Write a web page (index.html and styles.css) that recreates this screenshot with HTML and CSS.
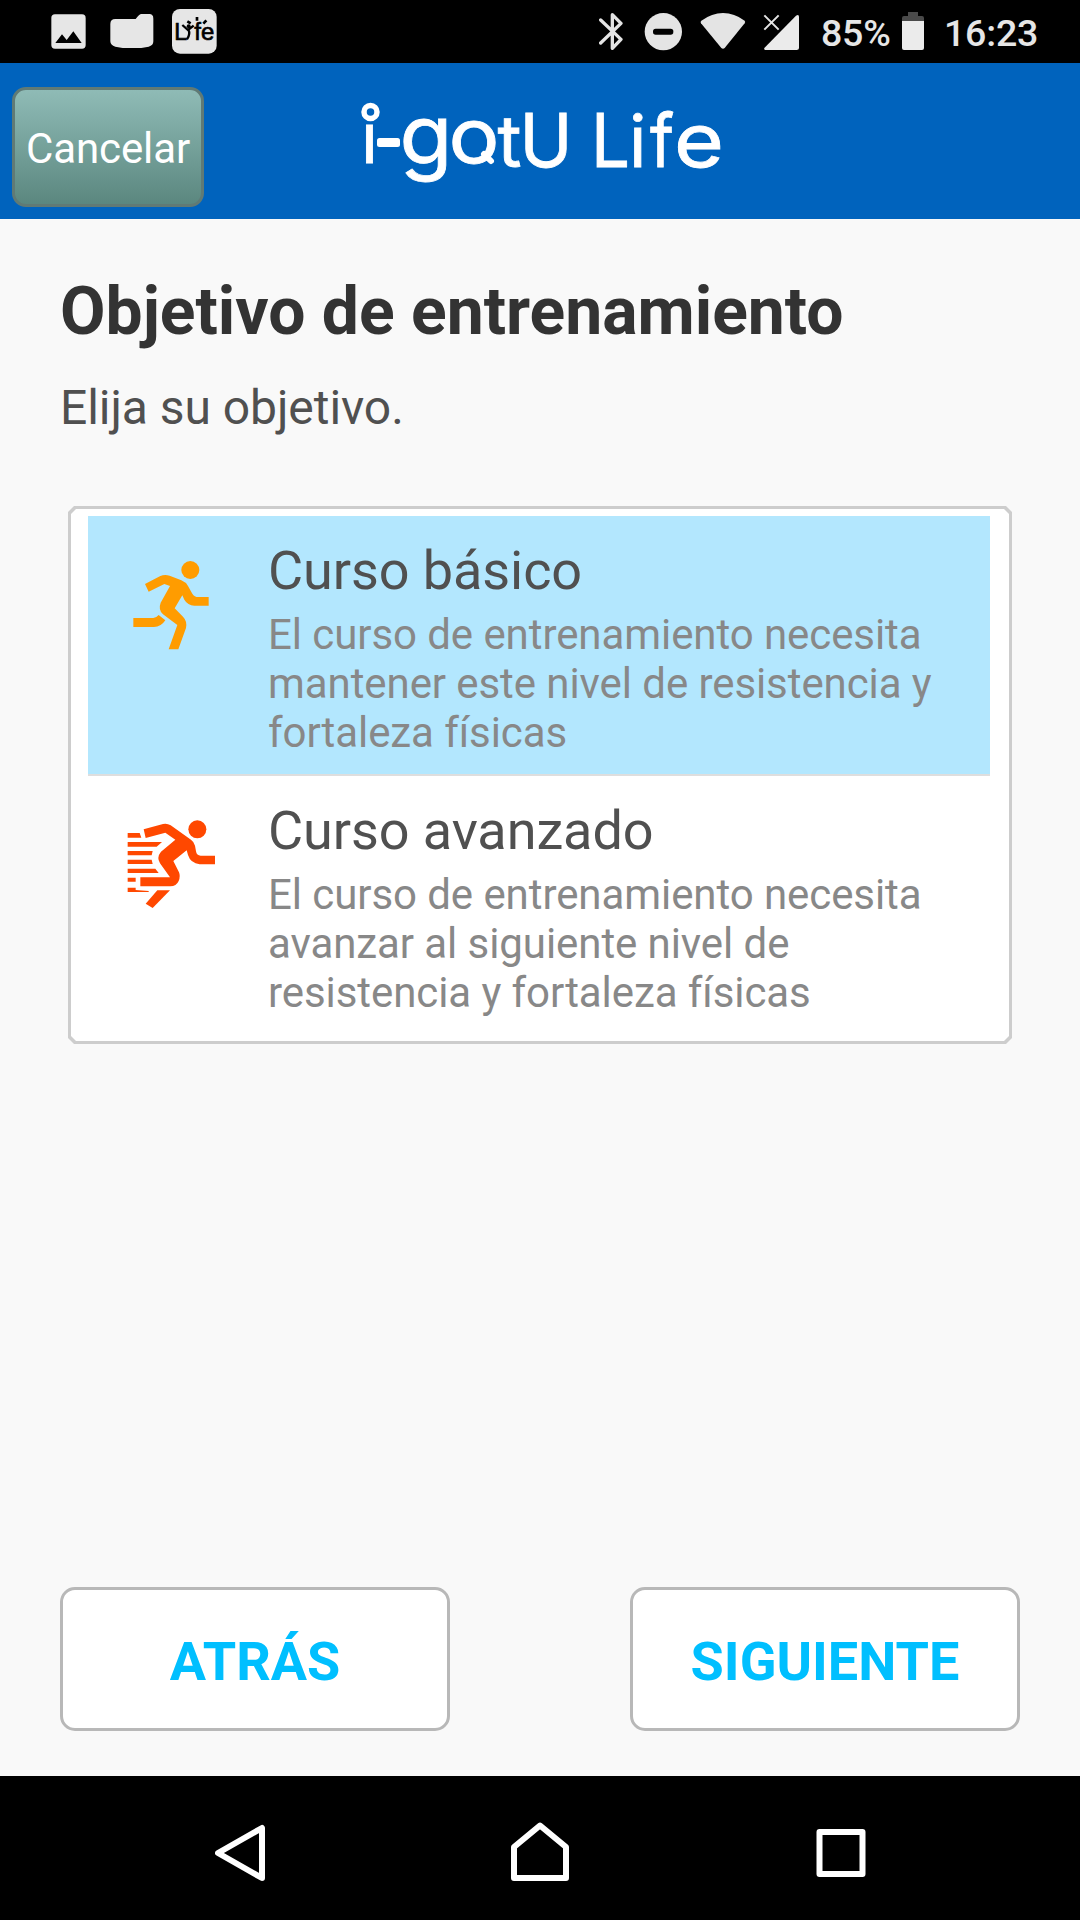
FILE: index.html
```html
<!DOCTYPE html>
<html lang="es">
<head>
<meta charset="utf-8">
<title>i-gotU Life</title>
<link rel="stylesheet" href="styles.css">
</head>
<body>
<div class="screen">
  <div class="status-bar">
    <div class="status-left">
      <svg width="35" height="63" viewBox="153 0 105 189"><rect x="154" y="43" width="103" height="103" rx="11" fill="#e6e6e6"/><path d="M166 129l20-26 14 17 20-26 25 35z" fill="#000"/></svg>
      <svg width="44" height="63" viewBox="329 0 132 189"><path d="M345 57h61q10-14 16-15h25q12 0 12 14v68q0 13-14 16l-22 4h-56l-22-4q-15-4-15-16V72q0-15 15-15z" fill="#e6e6e6"/></svg>
      <svg width="45" height="63" viewBox="516 0 135 189"><rect x="516" y="27" width="134" height="134" rx="24" fill="#e6e6e6"/>
        <text class="life-mark" x="523" y="120">L</text><text class="life-mark" x="583" y="121" textLength="60" lengthAdjust="spacingAndGlyphs">fe</text>
        <path d="M547 75l17 15 17-13M565 88q7 15-4 30" fill="none" stroke="#000" stroke-width="7"/><circle cx="566" cy="79" r="6"/>
        <path d="M562 64l10 6M591 51v11M619 61l-9 10" stroke="#000" stroke-width="8"/></svg>
    </div>
    <div class="status-right">
      <svg width="26" height="63" viewBox="56 0 78 189"><path d="M61 60L122 118L96 145V44L122 70L61 129" fill="none" stroke="#e4e4e4" stroke-width="10" stroke-linejoin="round" stroke-linecap="round"/></svg>
      <svg class="dnd" width="39" height="63" viewBox="193 0 117 189"><circle cx="251" cy="95" r="56" fill="#e4e4e4"/><rect x="220" y="86" width="61" height="18" rx="8" fill="#000"/></svg>
      <svg class="wifi" width="46" height="63" viewBox="360 0 138 189"><path d="M364 62Q396 39 429 39Q463 39 494 62Q497 66 494 70L434 144Q429 149 424 144L363 70Q360 65 364 62z" fill="#e4e4e4"/></svg>
      <svg class="signal" width="37" height="63" viewBox="549 0 111 189"><path d="M553 144L648 47Q657 41 657 51V144Q657 150 650 150H556Q550 149 553 144z" fill="#ebebeb"/><path d="M553 46l43 43M596 46l-43 43" stroke="#e4e4e4" stroke-width="6"/></svg>
      <span class="percent">85%</span>
      <svg class="battery" width="22" height="63" viewBox="966 0 66 189"><path d="M966 64V54q0-6 6-6h12V36h30v12h12q6 0 6 6v10z" fill="#4a4a4a"/><path d="M966 63h66v81q0 6-6 6h-54q-6 0-6-6z" fill="#ebebeb"/></svg>
      <span class="clock">16:23</span>
    </div>
  </div>

  <header class="app-bar">
    <button class="cancel">Cancelar</button>
    <svg class="logo" width="400" height="156" viewBox="340 63 400 156">
      <g class="brand">
        <text x="361" y="163" font-size="70">i</text>
        <rect x="377" y="138" width="23" height="9" rx="2.5" stroke="none"/>
        <text x="399.500" y="164" font-size="82" textLength="53" lengthAdjust="spacingAndGlyphs">g</text>
        <text x="448.500" y="163" font-size="76" textLength="51" lengthAdjust="spacingAndGlyphs">o</text>
        <path d="M484 154l7 7" fill="none" stroke-width="6" stroke-linecap="round"/>
        <text x="497.500" y="166.500" font-size="72" textLength="24" lengthAdjust="spacingAndGlyphs">t</text>
        <text x="519.500" y="166.500" font-size="74" textLength="53" lengthAdjust="spacingAndGlyphs">U</text>
        <text x="591" y="166.500" font-size="74" textLength="39" lengthAdjust="spacingAndGlyphs">L</text>
        <text x="629" y="166.500" font-size="72">i</text>
        <text x="650" y="166.500" font-size="74" textLength="24" lengthAdjust="spacingAndGlyphs">f</text>
        <text x="674" y="166.500" font-size="74" textLength="50" lengthAdjust="spacingAndGlyphs">e</text>
      </g>
      <circle cx="370.500" cy="112" r="6.500" fill="#0063bd" stroke="#fff" stroke-width="5.500"/>
    </svg>
  </header>

  <main class="content">
    <h1>Objetivo de entrenamiento</h1>
    <p class="hint">Elija su objetivo.</p>
    <div class="card">
      <div class="card-body">
        <div class="option selected">
          <svg class="runner" width="76" height="89" viewBox="250 213 228 267" fill="#ff9c00"><circle cx="422" cy="240" r="27"/><path d="M286 282L332 258Q345 252 360 257L395 271Q408 276 415 288L428 311Q434 321 446 321H477V347H434Q414 346 404 329L398 316L375 355L400 380Q413 393 409 414L386 478H357L383 405L340 373Q325 359 333 338L361 288L344 282L297 305z"/><path d="M251 384H311Q319 384 327 375L347 391Q334 411 313 411H251z"/></svg>
          <div class="option-text">
            <h2>Curso básico</h2>
            <p>El curso de entrenamiento necesita mantener este nivel de resistencia y fortaleza físicas</p>
          </div>
        </div>
        <div class="option">
          <svg class="sprinter" width="88" height="88" viewBox="232 181 264 264" fill="#ff4800"><circle cx="443" cy="209" r="27"/><path d="M282 209L340 193Q352 190 363 197L424 240Q434 247 436 258L439 275Q441 288 453 288H496V314H450Q423 311 415 286L411 272L371 304L388 338Q393 350 387 364Q380 380 362 380H272V353H361L331 311Q320 293 334 276L377 240L347 219L288 235z"/><path d="M323 392H361L309 445L288 432z"/><path d="M234 220H270L275 234H234zM234 247H337L321 261H234zM234 274H309L306 287H234zM234 300H306L309 313H234zM234 327H317L327 340H234zM234 354H258V366H234zM234 384H258V391L297 394V397H234z"/></svg>
          <div class="option-text">
            <h2>Curso avanzado</h2>
            <p>El curso de entrenamiento necesita avanzar al siguiente nivel de resistencia y fortaleza físicas</p>
          </div>
        </div>
      </div>
    </div>
    <div class="actions">
      <button class="action">ATRÁS</button>
      <button class="action">SIGUIENTE</button>
    </div>
  </main>

  <nav class="nav-bar">
    <svg width="50" height="60" viewBox="215 1822 50 60"><path d="M262 1828V1878L218 1853z"/></svg>
    <svg width="58" height="60" viewBox="511 1822 58 60"><path d="M514 1878V1847L540 1825.500L566 1847V1878z"/></svg>
    <svg width="50" height="60" viewBox="815.500 1822 50 60"><path d="M819 1832H862V1874H819z"/></svg>
  </nav>
</div>
</body>
</html>
```
FILE: styles.css
```css
* { box-sizing: border-box; margin: 0; padding: 0; }
body { width: 1080px; font-family: Roboto, sans-serif; background: #f9f9f9; }
svg { display: block; flex: none; }
button { font-family: inherit; }
.screen { display: flex; flex-direction: column; width: 1080px; height: 1920px; }

.status-bar { display: flex; justify-content: space-between; height: 63px; background: #000; }
.status-left { display: flex; padding-left: 51px; gap: 21px; }
.status-left svg + svg { margin-left: 3px; }
.status-left svg:last-child { margin-left: -3px; }
.life-mark { font-family: "Liberation Sans", sans-serif; font-size: 70px; stroke: #000; stroke-width: 2; }
.status-right { display: flex; padding-right: 42px; color: #e6e6e6; font-size: 37.5px; font-weight: 500; line-height: 67px; letter-spacing: -0.2px; }
.dnd { margin-left: 19px; }
.wifi { margin-left: 17px; }
.signal { margin-left: 17px; }
.percent { width: 80px; margin-left: 21px; white-space: nowrap; }
.battery { margin-left: 1px; }
.clock { width: 94px; margin-left: 20px; }

.app-bar { display: flex; height: 156px; padding-left: 12px; background: #0063bd; }
.cancel { width: 192px; height: 120px; margin-top: 24px; padding-top: 3px; border: 3px solid #607a75; border-radius: 14px; background: linear-gradient(#8fbbb6, #5b877f); color: #fff; font-size: 42px; letter-spacing: -0.1px; }
.logo { margin-left: 136px; }
.brand { font-family: Inter, sans-serif; fill: #fff; stroke: #fff; stroke-width: 0.8; }

.content { display: flex; flex-direction: column; height: 1557px; padding: 54px 60px 45px; background: #f9f9f9; }
h1 { font-size: 66px; line-height: 78px; color: #333; }
.hint { margin-top: 29px; font-size: 48px; line-height: 56px; letter-spacing: -0.06px; color: #505050; }
.card { width: 944px; height: 538px; margin: 70px 0 0 8px; padding: 3px; background: #cdcdcd; clip-path: polygon(6px 0, calc(100% - 6px) 0, 100% 6px, 100% calc(100% - 6px), calc(100% - 6px) 100%, 6px 100%, 0 calc(100% - 6px), 0 6px); }
.card-body { height: 532px; padding: 7px 19px 0 17px; background: #fff; clip-path: polygon(5px 0, calc(100% - 5px) 0, 100% 5px, 100% calc(100% - 5px), calc(100% - 5px) 100%, 5px 100%, 0 calc(100% - 5px), 0 5px); }
.option { display: flex; height: 258px; width: 902px; padding-top: 23px; }
.option.selected { height: 260px; background: #b3e7fe; border-bottom: 2px solid #dedede; }
.runner { margin: 22px 59px 0 45px; }
.sprinter { margin: 21px 53px 0 39px; }
.option-text { width: 690px; }
h2 { font-size: 54px; line-height: 64px; font-weight: 400; letter-spacing: -0.08px; color: #505050; }
.option p { margin-top: 7px; font-size: 42px; line-height: 49px; letter-spacing: -0.075px; color: #888; }
.actions { display: flex; justify-content: space-between; margin-top: auto; }
.action { width: 390px; height: 144px; padding-top: 5px; border: 3px solid #b8b8b8; border-radius: 15px; background: #fff; color: #00bfff; font-size: 54px; font-weight: 700; }

.nav-bar { display: flex; justify-content: space-between; height: 144px; padding: 46px 214.500px 0 215px; background: #000; }
.nav-bar svg { fill: none; stroke: #fff; stroke-width: 6; stroke-linejoin: round; }
```
